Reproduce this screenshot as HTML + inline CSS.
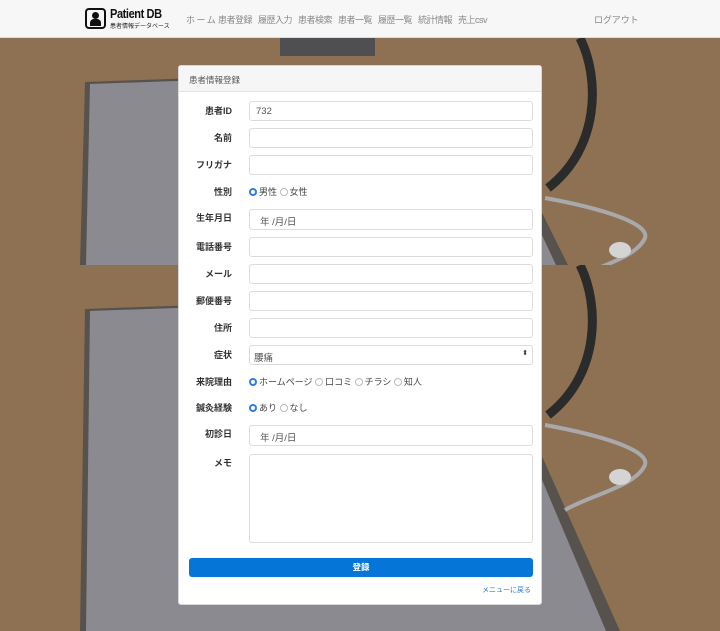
<!DOCTYPE html>
<html><head><meta charset="utf-8"><style>
*{box-sizing:border-box;margin:0;padding:0}
body{width:720px;height:631px;overflow:hidden;position:relative;font-family:"Liberation Sans","Noto Sans CJK JP",sans-serif;background:#8f7252}
.nav{position:absolute;left:0;top:0;width:720px;height:38px;background:#f7f7f7;border-bottom:1px solid #ddd;z-index:2}
.nav a{position:absolute;top:13px;font-size:9px;color:#888;text-decoration:none;white-space:nowrap;letter-spacing:-0.1px}
.bg{position:absolute;left:0;width:720px}
.card{position:absolute;left:178px;top:65px;width:364px;height:540px;background:#fff;border:1px solid #d8d8d8;border-radius:3px;z-index:2}
.hd{height:26px;background:#f6f6f7;border-bottom:1px solid #e3e3e3;font-size:8.5px;color:#555;padding:8px 10px}
.lb{position:absolute;right:309px;font-size:9px;font-weight:bold;color:#333;white-space:nowrap}
.in{position:absolute;left:70px;width:284px;height:20px;border:1px solid #dcdcdc;border-radius:3px;background:#fff;font-size:9.5px;color:#555;padding:4px 6px}
.rd{position:absolute;left:70px;font-size:9px;color:#444;white-space:nowrap}
.r{display:inline-block;width:8px;height:8px;border:1px solid #bbb;border-radius:50%;vertical-align:-1px;margin-right:2px;background:#fff}
.r.on{border:2.5px solid #2f7de1}
.btn{position:absolute;left:10px;top:492px;width:344px;height:19px;background:#0575d8;border-radius:3px;color:#fff;font-size:8.5px;font-weight:bold;text-align:center;line-height:19px}
.back{position:absolute;right:10px;top:519px;font-size:7px;color:#2a7ad8}
</style></head><body>
<svg class="bg" style="top:38px;height:227px" viewBox="0 0 720 227">
<rect width="720" height="227" fill="#8d7152"/>
<polygon points="85,44 470,30 568,227 80,227" fill="#57524d"/>
<polygon points="90,46 465,33 556,227 86,227" fill="#8b8a90"/>
<rect x="280" y="0" width="95" height="18" fill="#4f4f52"/>
<path d="M580,0 C600,40 600,110 548,150" stroke="#2b2b2c" stroke-width="9" fill="none"/>
<path d="M545,160 C600,170 650,185 645,200 C635,222 590,230 565,245" stroke="#a9a9ac" stroke-width="4" fill="none"/>
<ellipse cx="620" cy="212" rx="11" ry="8" fill="#d4d4d4"/>
</svg>
<svg class="bg" style="top:265px;height:366px" viewBox="0 0 720 366">
<rect width="720" height="366" fill="#8d7152"/>
<polygon points="85,44 470,30 620,366 80,366" fill="#57524d"/>
<polygon points="90,46 465,33 606,366 86,366" fill="#8b8a90"/>
<rect x="280" y="0" width="95" height="18" fill="#4f4f52"/>
<path d="M580,0 C600,40 600,110 548,150" stroke="#2b2b2c" stroke-width="9" fill="none"/>
<path d="M545,160 C600,170 650,185 645,200 C635,222 590,230 565,245" stroke="#a9a9ac" stroke-width="4" fill="none"/>
<ellipse cx="620" cy="212" rx="11" ry="8" fill="#d4d4d4"/>
</svg>
<div class="nav">
<div style="position:absolute;left:85px;top:8px;width:21px;height:21px;border:2px solid #111;border-radius:4px"><div style="position:absolute;left:5px;top:2px;width:7px;height:7px;border-radius:50%;background:#111"></div><div style="position:absolute;left:3px;top:9px;width:11px;height:7px;border-radius:4px 4px 0 0;background:#111"></div></div>
<div style="position:absolute;left:110px;top:6px;font-size:13px;font-weight:bold;color:#111;letter-spacing:-0.5px;transform:scaleX(0.85);transform-origin:left">Patient DB</div>
<div style="position:absolute;left:110px;top:21px;font-size:6px;color:#222">患者情報データベース</div>
<a style="left:186px;letter-spacing:1.5px">ホーム</a><a style="left:218px;letter-spacing:-0.5px">患者登録</a><a style="left:258px;letter-spacing:-0.5px">履歴入力</a><a style="left:298px;letter-spacing:-0.5px">患者検索</a><a style="left:338px;letter-spacing:-0.5px">患者一覧</a><a style="left:378px;letter-spacing:-0.5px">履歴一覧</a><a style="left:418px;letter-spacing:-0.5px">統計情報</a><a style="left:458px;letter-spacing:-0.5px">売上csv</a><a style="left:594px">ログアウト</a>
</div>
<div class="card">
<div class="hd">患者情報登録</div>
<div class="lb" style="top:38px">患者ID</div><div class="in" style="top:35px">732</div>
<div class="lb" style="top:65px">名前</div><div class="in" style="top:62px"></div>
<div class="lb" style="top:92px">フリガナ</div><div class="in" style="top:89px"></div>
<div class="lb" style="top:119px">性別</div><div class="rd" style="top:119px"><span class="r on"></span>男性 <span class="r"></span>女性</div>
<div class="lb" style="top:145px">生年月日</div><div class="in" style="top:143px;height:21px;padding-left:10px">年 /月/日</div>
<div class="lb" style="top:174px">電話番号</div><div class="in" style="top:171px"></div>
<div class="lb" style="top:201px">メール</div><div class="in" style="top:198px"></div>
<div class="lb" style="top:228px">郵便番号</div><div class="in" style="top:225px"></div>
<div class="lb" style="top:255px">住所</div><div class="in" style="top:252px"></div>
<div class="lb" style="top:282px">症状</div><div class="in" style="top:279px;padding-left:4px">腰痛<span style="position:absolute;right:4px;top:3px;font-size:7px;color:#333">⬍</span></div>
<div class="lb" style="top:309px">来院理由</div><div class="rd" style="top:309px"><span class="r on"></span>ホームページ <span class="r"></span>口コミ <span class="r"></span>チラシ <span class="r"></span>知人</div>
<div class="lb" style="top:335px">鍼灸経験</div><div class="rd" style="top:335px"><span class="r on"></span>あり <span class="r"></span>なし</div>
<div class="lb" style="top:361px">初診日</div><div class="in" style="top:359px;height:21px;padding-left:10px">年 /月/日</div>
<div class="lb" style="top:390px">メモ</div><div class="in" style="top:388px;height:89px"></div>
<div class="btn">登録</div>
<div class="back">メニューに戻る</div>
</div>
</body></html>
